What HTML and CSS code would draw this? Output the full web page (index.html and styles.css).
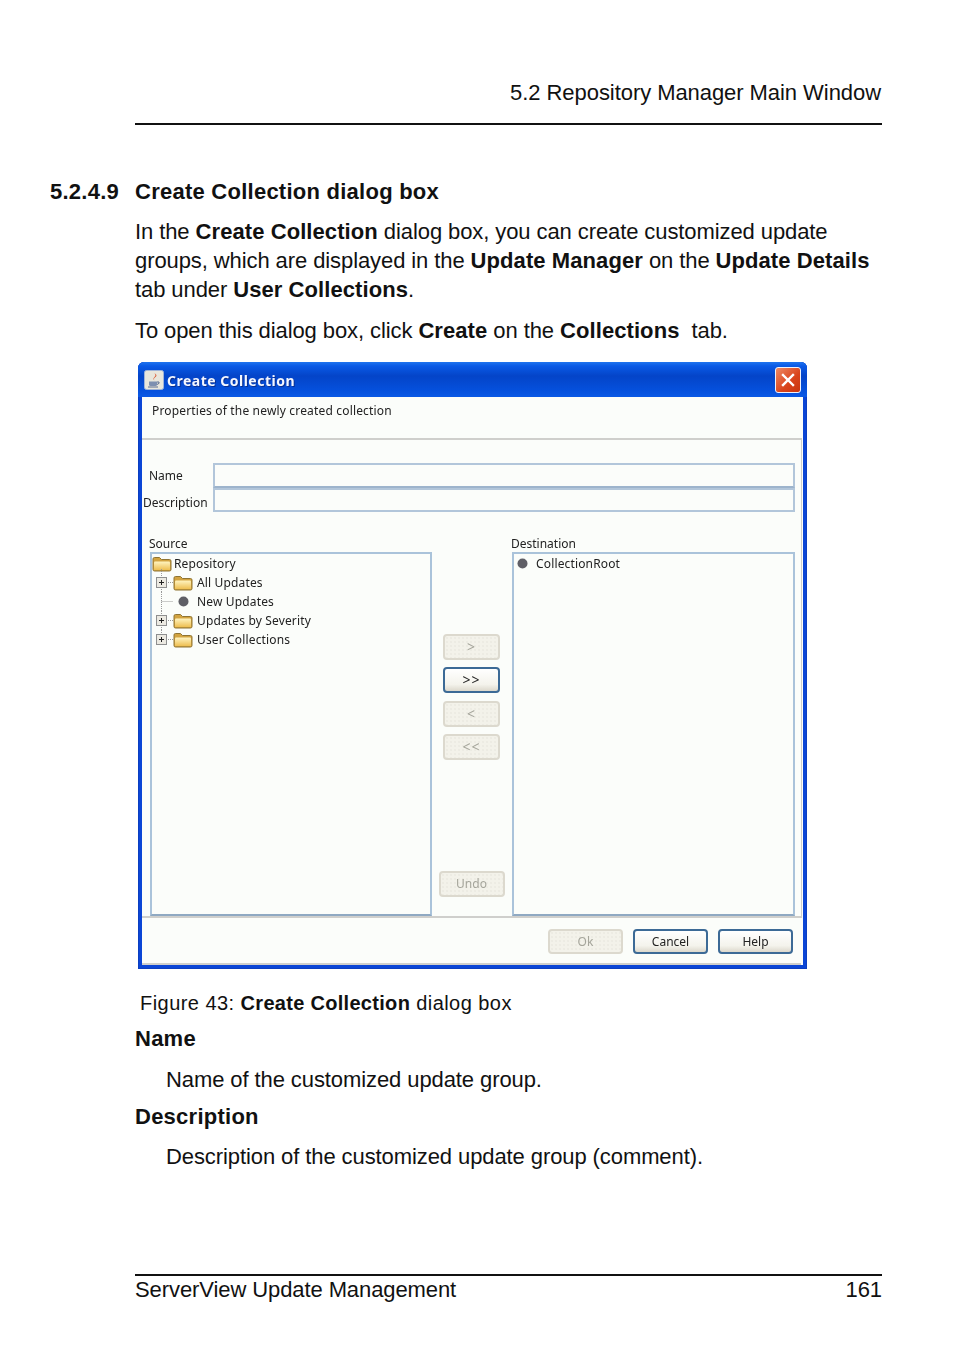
FILE: index.html
```html
<!DOCTYPE html>
<html lang="en">
<head>
<meta charset="utf-8">
<title>Create Collection dialog box</title>
<link rel="stylesheet" href="styles.css">
</head>
<body>
<svg class="defs" width="0" height="0" aria-hidden="true">
  <defs>
    <linearGradient id="fold" x1="0" y1="0" x2="0" y2="1">
      <stop offset="0" stop-color="#fff4c0"/><stop offset="1" stop-color="#eebf52"/>
    </linearGradient>
    <symbol id="folder" viewBox="0 0 20 16">
      <path d="M1 13.500V3Q1 1.500 2.500 1.500H7.500L9.500 3.500H17.500Q19 3.500 19 5V13.500Q19 15 17.500 15H2.500Q1 15 1 13.500Z" fill="#d2a340" stroke="#8f7432" stroke-width="1"/>
      <path d="M2 13.500V6.500Q2 5.500 3 5.500H17Q18 5.500 18 6.500V13.500Q18 14 17.500 14H2.500Q2 14 2 13.500Z" fill="url(#fold)"/>
    </symbol>
    <symbol id="plus" viewBox="0 0 11 11">
      <rect x="0.5" y="0.5" width="10" height="10" fill="#eceae2" stroke="#8e8f8f"/>
      <path d="M3 5.500H8M5.500 3V8" stroke="#222" stroke-width="1"/>
    </symbol>
    <symbol id="leaf" viewBox="0 0 11 11">
      <circle cx="5.500" cy="5.500" r="5" fill="#5f5f66"/>
    </symbol>
  </defs>
</svg>
<div class="page">
  <header class="run-head">5.2 Repository Manager Main Window</header>

  <h2 class="section"><span class="secnum">5.2.4.9</span><span>Create Collection dialog box</span></h2>

  <div class="content">
    <p class="para">In the <b>Create Collection</b> dialog box, you can create customized update<br>groups, which are displayed in the <b>Update Manager</b> on the <b>Update Details</b><br>tab under <b>User Collections</b>.</p>
    <p class="para open">To open this dialog box, click <b>Create</b> on the <b>Collections</b>&nbsp; tab.</p>

    <div class="dialog">
      <div class="titlebar">
        <svg class="java" viewBox="0 0 20 20" width="20" height="20" aria-hidden="true">
          <rect x="0.5" y="0.5" width="19" height="19" rx="2" fill="#e9e6dc" stroke="#9fb3d8"/>
          <path d="M10 3Q13 5 10 7.500Q8.500 9 10.500 10.500Q9 8.500 11.500 7Q14 5 10 3Z" fill="#d8502a"/>
          <path d="M5 11.500H13V14.500Q13 16 11.500 16H6.500Q5 16 5 14.500Z" fill="#7d8fb0"/>
          <path d="M13 12H15Q16 13.500 13 14.500M4 17H14" fill="none" stroke="#5a6d92" stroke-width="1"/>
        </svg>
        <span class="title-text">Create Collection</span>
        <span class="close" aria-hidden="true">
          <svg viewBox="0 0 14 14" width="14" height="14"><path d="M2 2L12 12M12 2L2 12" stroke="#fff" stroke-width="2.400" stroke-linecap="square"/></svg>
        </span>
      </div>
      <div class="dlg-body">
        <div class="dlg-desc">Properties of the newly created collection</div>
        <div class="dlg-main">
          <div class="form-row first"><label class="lab lab-name">Name</label><div class="field"></div></div>
          <div class="form-row"><label class="lab lab-desc">Description</label><div class="field"></div></div>
          <div class="pick">
            <div class="col-src">
              <div class="col-label">Source</div>
              <div class="tree">
                <div class="row root"><svg class="ico"><use href="#folder"/></svg><span>Repository</span></div>
                <div class="row">
                  <svg class="gut" width="17" height="19" aria-hidden="true"><path class="dot" d="M5.500 -4V19M10 9.500H17"/><use href="#plus" x="0" y="4" width="11" height="11"/></svg>
                  <svg class="ico"><use href="#folder"/></svg><span>All Updates</span>
                </div>
                <div class="row">
                  <svg class="gut" width="17" height="19" aria-hidden="true"><path class="dot" d="M5.500 0V19M5.500 9.500H17"/></svg>
                  <svg class="ico leaf"><use href="#leaf"/></svg><span>New Updates</span>
                </div>
                <div class="row">
                  <svg class="gut" width="17" height="19" aria-hidden="true"><path class="dot" d="M5.500 0V19M10 9.500H17"/><use href="#plus" x="0" y="4" width="11" height="11"/></svg>
                  <svg class="ico"><use href="#folder"/></svg><span>Updates by Severity</span>
                </div>
                <div class="row">
                  <svg class="gut" width="17" height="19" aria-hidden="true"><path class="dot" d="M5.500 0V5M10 9.500H17"/><use href="#plus" x="0" y="4" width="11" height="11"/></svg>
                  <svg class="ico"><use href="#folder"/></svg><span>User Collections</span>
                </div>
              </div>
            </div>
            <div class="col-btns">
              <button class="btn arrow" disabled>&gt;</button>
              <button class="btn arrow">&gt;&gt;</button>
              <button class="btn arrow" disabled>&lt;</button>
              <button class="btn arrow" disabled>&lt;&lt;</button>
              <button class="btn undo" disabled>Undo</button>
            </div>
            <div class="col-dst">
              <div class="col-label">Destination</div>
              <div class="tree">
                <div class="row dst-row"><svg class="ico leaf"><use href="#leaf"/></svg><span>CollectionRoot</span></div>
              </div>
            </div>
          </div>
        </div>
        <div class="dlg-foot">
          <button class="btn foot" disabled>Ok</button>
          <button class="btn foot">Cancel</button>
          <button class="btn foot">Help</button>
        </div>
      </div>
    </div>

    <p class="caption">Figure 43: <b>Create Collection</b> dialog box</p>
    <h3 class="term">Name</h3>
    <p class="def">Name of the customized update group.</p>
    <h3 class="term term2">Description</h3>
    <p class="def def2">Description of the customized update group (comment).</p>
  </div>

  <footer class="run-foot"><span>ServerView Update Management</span><span>161</span></footer>
</div>
</body>
</html>
```
FILE: styles.css
```css
* { box-sizing: border-box; }
html, body { margin: 0; padding: 0; background: #fff; }
body { width: 954px; height: 1354px; overflow: hidden; font-family: "Liberation Sans", Arial, sans-serif; color: #111; }
.defs { display: block; height: 0; }
.page { padding: 78px 72px 0 50px; font-size: 22px; line-height: 29px; letter-spacing: -0.09px; }
.page b { letter-spacing: 0.08px; }
.run-head { margin-left: 85px; height: 47px; padding: 0 1px 14px 0; line-height: 29px; letter-spacing: -0.06px; text-align: right; border-bottom: 2px solid #111; }
.section { display: flex; margin: 52px 0 0; font-size: 22px; line-height: 29px; font-weight: bold; letter-spacing: 0.25px; }
.secnum { width: 85px; }
.content { margin-left: 85px; }
.para { margin: 11px 0 0; }
.open { margin-top: 12px; }
.dialog { width: 669px; height: 607px; margin: 17px 0 0 3px; border-radius: 6px 6px 0 0; background: #0a45d6; padding: 0 4px 4px; display: flex; flex-direction: column; font-family: "Noto Sans", sans-serif; font-size: 12px; line-height: 16px; letter-spacing: 0; color: #222; box-shadow: inset 0 0 0 1px #0b3ec0; filter: blur(0.35px); }
.titlebar { height: 35px; flex: none; margin: 0 -4px; padding: 0 6px 0 6px; display: flex; align-items: center; border-radius: 6px 6px 0 0; background: linear-gradient(#1f74ee 0, #0a5ae6 4px, #0444c8 14px, #0550dc 28px, #0a58e4 34px); }
.java { flex: none; }
.title-text { margin-left: 3px; padding-top: 2px; font-weight: bold; font-size: 14px; letter-spacing: 0.5px; color: #f4f7ff; text-shadow: 1px 1px 0 #0a2f90; }
.close { margin-left: auto; width: 26px; height: 26px; display: flex; align-items: center; justify-content: center; border: 1px solid #eef2fb; border-radius: 3px; background: linear-gradient(135deg, #ee8a64, #d9431a 60%, #c9350f); }
.dlg-body { flex: 1; display: flex; flex-direction: column; background: #fbfdfa; }
.dlg-desc { height: 41px; padding: 6px 0 0 10px; flex: none; letter-spacing: 0.17px; }
.dlg-main { height: 480px; flex: none; margin-right: 1px; padding: 0 6px 0 0; border-top: 2px solid #cfcfcc; border-right: 1px solid #cfcfcc; border-bottom: 2px solid #cfcfcc; display: flex; flex-direction: column; }
.form-row { display: flex; align-items: center; height: 24px; }
.form-row.first { margin-top: 23px; height: 25px; }
.lab { width: 71px; flex: none; padding-left: 1px; }
.lab-name { padding-left: 7px; }
.lab-desc { padding-top: 6px; }
.field { flex: 1; height: 100%; border: 2px solid #b2c6da; }
.form-row.first .field { border-bottom-color: #9db4cc; }
.pick { flex: 1; display: flex; margin-top: 24px; min-height: 0; }
.col-src { width: 290px; margin-left: 8px; flex: none; display: flex; flex-direction: column; }
.col-dst { flex: 1; display: flex; flex-direction: column; }
.col-label { height: 16px; flex: none; margin-left: -1px; }
.tree { flex: 1; border: 2px solid #aac3da; border-bottom-color: #8fa9c2; letter-spacing: 0.15px; }
.col-src .tree { width: 282px; }
.col-btns { width: 81px; margin-left: -9px; padding-top: 98px; display: flex; flex-direction: column; align-items: center; gap: 7.4px; flex: none; }
.row { height: 19px; display: flex; align-items: center; padding-left: 4px; white-space: nowrap; }
.row span { display: block; }
.root { padding-left: 0; }
.gut { flex: none; overflow: visible; }
.dot { fill: none; stroke: #9a9a9a; stroke-dasharray: 1 1; }
.ico { width: 20px; height: 16px; flex: none; margin-right: 2px; }
.row .gut + .ico { margin-right: 4px; }
.row .gut + .leaf { margin: 0 8px 0 5px; }
.leaf { width: 11px; height: 11px; }
.dst-row { padding-left: 0; }
.dst-row .leaf { margin: 0 8px 0 3px; }
.btn { font: inherit; color: #222; padding: 0; border: 2px solid #3c6a96; border-radius: 4px; background: linear-gradient(#ffffff, #f4f3ec 70%, #dcd8cc); letter-spacing: 0; }
.btn:disabled { color: #a5a59b; border-color: #dcd9ce; background: radial-gradient(circle, #e4e3da 0.6px, transparent 0.8px) 0 0 / 4px 4px, #f3f2ea; }
.arrow { width: 57px; height: 26px; font-size: 14px; letter-spacing: 1px; }
.undo { width: 66px; height: 26px; margin-top: auto; margin-bottom: 19px; font-size: 12px; }
.dlg-foot { flex: 1; display: flex; justify-content: flex-end; align-items: flex-start; gap: 10px; padding: 11px 8px 0 0; border-bottom: 2px solid #cfcfcc; margin-right: 2px; }
.foot { width: 75px; height: 25px; }
.caption { margin: 20px 0 0 5px; font-size: 20px; letter-spacing: 0.45px; }
.page .caption b { letter-spacing: 0.3px; }
.term { margin: 6px 0 0; font-size: 22px; line-height: 29px; font-weight: bold; letter-spacing: 0.25px; }
.term2 { margin-top: 8px; }
.def { margin: 12px 0 0 31px; }
.def2 { margin-top: 11px; }
.run-foot { margin: 103px 0 0 85px; height: 32px; line-height: 28px; display: flex; justify-content: space-between; border-top: 2px solid #111; }
```
